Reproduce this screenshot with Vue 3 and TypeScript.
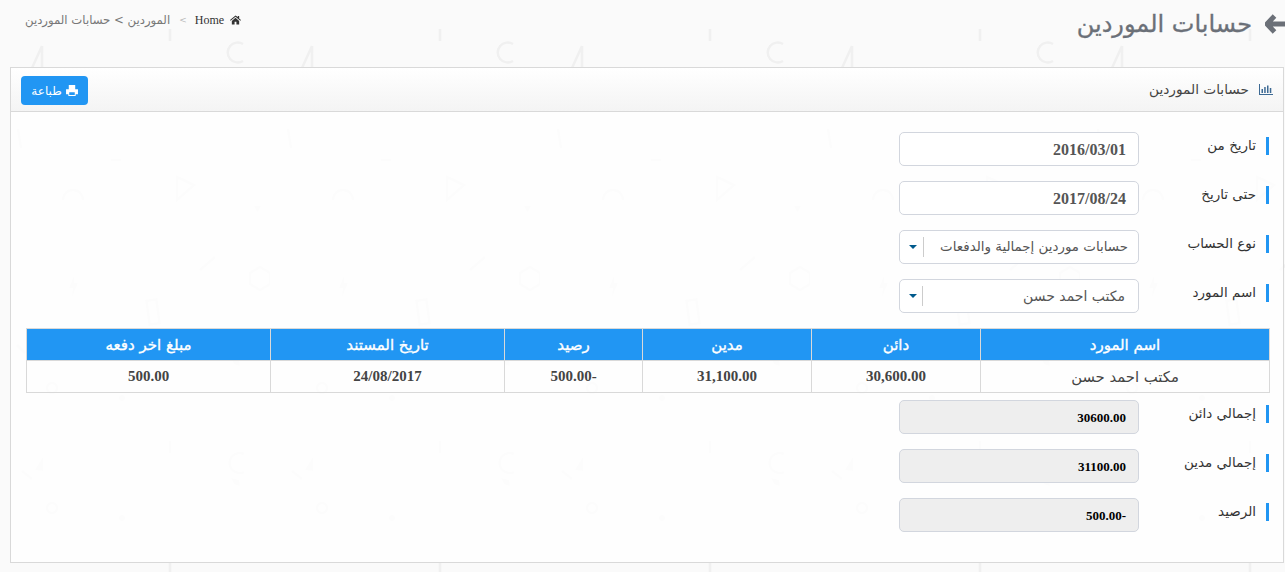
<template>
  <div class="page" dir="rtl">
    <div class="topbar">
      <h1 class="title">
        <svg class="back" viewBox="0 0 20 22" width="20" height="22">
          <path d="M9.500 3 2 11l7.500 8M3.500 11H20" fill="none" stroke="#6b7078" stroke-width="5" stroke-linejoin="round" />
        </svg>
        <span>حسابات الموردين</span>
      </h1>
      <div class="crumbs">
        <svg class="home" viewBox="0 0 12 10" width="11" height="10">
          <path d="M6 0 0 5l.7.8L6 1.400l5.300 4.400.7-.8-2-1.700V.6H8.600v1.200zM2 6v4h3V7h2v3h3V6L6 2.600z" fill="#333" />
        </svg>
        <span class="home-text">Home</span>
        <span class="sep">&gt;</span>
        <span class="current">الموردين &gt; حسابات الموردين</span>
      </div>
    </div>

    <section class="panel">
      <header class="panel-head">
        <div class="head-title">
          <svg viewBox="0 0 14 11" width="14" height="11">
            <path d="M0 0h1v10h13v1H0zM2.500 5h1.500v4H2.500zM5.200 3h1.500v6H5.200zM8 1.500h1.500V9H8zM10.800 4h1.500v5h-1.500z" fill="#3d6a94" />
          </svg>
          <span>حسابات الموردين</span>
        </div>
        <button class="print" type="button">
          <svg viewBox="0 0 13 12" width="12" height="11">
            <path d="M3 0h7v4.500H3zM0 4.500h13V10h-2.500v2h-8v-2H0zM3.500 8v2.800h6V8z" fill="#fff" fill-rule="evenodd" />
          </svg>
          <span>طباعة</span>
        </button>
      </header>

      <div class="panel-body">
        <div v-for="row in filters" :key="row.label" class="row">
          <label class="label">{{ row.label }}</label>
          <div class="control date">{{ row.value }}</div>
        </div>

        <div v-for="(row, i) in selects" :key="row.label" class="row">
          <label class="label">{{ row.label }}</label>
          <div class="control select" :class="{ narrow: i === 1 }">
            <span>{{ row.value }}</span>
            <i class="arrow"></i>
          </div>
        </div>

        <table class="grid">
          <colgroup>
            <col v-for="w in colWidths" :key="w.id" :style="{ width: w.size + 'px' }" />
          </colgroup>
          <thead>
            <tr>
              <th v-for="h in headers" :key="h">{{ h }}</th>
            </tr>
          </thead>
          <tbody>
            <tr>
              <td class="name">مكتب احمد حسن</td>
              <td>30,600.00</td>
              <td>31,100.00</td>
              <td>-500.00</td>
              <td>24/08/2017</td>
              <td>500.00</td>
            </tr>
          </tbody>
        </table>

        <div v-for="row in totals" :key="row.label" class="row">
          <label class="label">{{ row.label }}</label>
          <div class="control total">{{ row.value }}</div>
        </div>
      </div>
    </section>
  </div>
</template>

<script setup lang="ts">
const filters = [
  { label: 'تاريخ من', value: '2016/03/01' },
  { label: 'حتى تاريخ', value: '2017/08/24' },
]

const selects = [
  { label: 'نوع الحساب', value: 'حسابات موردين إجمالية والدفعات' },
  { label: 'اسم المورد', value: 'مكتب احمد حسن' },
]

const headers = ['اسم المورد', 'دائن', 'مدين', 'رصيد', 'تاريخ المستند', 'مبلغ اخر دفعه']

const colWidths = [
  { id: 'name', size: 289 },
  { id: 'credit', size: 169 },
  { id: 'debit', size: 169 },
  { id: 'balance', size: 138 },
  { id: 'date', size: 234 },
  { id: 'last', size: 244 },
]

const totals = [
  { label: 'إجمالي دائن', value: '30600.00' },
  { label: 'إجمالي مدين', value: '31100.00' },
  { label: 'الرصيد', value: '-500.00' },
]
</script>

<style>
html,
body {
  margin: 0;
  height: 572px;
  overflow: hidden;
}

body {
  background-color: #fafafa;
  background-image: url("data:image/svg+xml,%3Csvg xmlns='http://www.w3.org/2000/svg' width='270' height='572'%3E%3Cg fill='none' stroke='%23f0f0f0' stroke-width='2.5'%3E%3Cpath d='M170 29v12M243 44a10 10 0 1 0 0 17M42 46 32 68M42 46v22M18 129l3 19M111 160h10M63 200a10 10 0 0 1 20 0M177 177l17 8-17 15zM200 270l15-13M260 267l10 6v11l-10 6-10-6v-11zM17 345l8 8M170 441v12M244 454a10 10 0 1 0 0 18M22 471l10 8M170 563v9'/%3E%3Crect x='148' y='300' width='10' height='24' transform='rotate(-8 153 312)'/%3E%3Ccircle cx='52' cy='388' r='5'/%3E%3Ccircle cx='52' cy='508' r='5'/%3E%3C/g%3E%3Cg fill='%23f0f0f0'%3E%3Cpath d='M254 206h7l-3.500 6zM74 276l-5 12h4l-1 9 6-14h-4zM231 358l8 2 1 6-6-2zM43 457l-8 13 8 1zM231 478l8 2 1 6-6-2z'/%3E%3Ccircle cx='122' cy='398' r='3'/%3E%3Ccircle cx='122' cy='518' r='3'/%3E%3C/g%3E%3C/svg%3E");
}
</style>

<style scoped>
.page {
  font-family: "DejaVu Sans", sans-serif;
  color: #444;
  height: 572px;
}

.topbar {
  display: flex;
  justify-content: space-between;
  height: 67px;
}

.title {
  display: flex;
  align-items: center;
  gap: 13px;
  height: 48px;
  margin: 0;
  font-size: 24px;
  font-weight: 400;
  color: #6b7078;
  -webkit-text-stroke: 0.3px #6b7078;
}

.back {
  flex: none;
}

.crumbs {
  display: flex;
  align-items: center;
  height: 40px;
  padding-left: 25px;
  font-size: 11.7px;
  color: #777;
}

.home-text {
  margin: 0 6px 0 5px;
  font-family: "Liberation Serif", serif;
  font-size: 12px;
  color: #333;
}

.sep {
  margin: 0 3px 0 9px;
  font-size: 9px;
  color: #bbb;
}

.panel {
  margin: 0 1px 0 10px;
  height: 496px;
  box-sizing: border-box;
  border: 1px solid #d9d9d9;
  background: rgba(255, 255, 255, 0.8);
}

.panel-head {
  display: flex;
  justify-content: space-between;
  align-items: center;
  box-sizing: border-box;
  height: 44px;
  padding: 0 10px;
  border-bottom: 1px solid #d9d9d9;
  background: linear-gradient(#fff, #f4f4f4);
}

.head-title {
  display: flex;
  align-items: center;
  gap: 10px;
  margin-top: -1px;
  font-size: 13.7px;
  color: #444;
}

.print {
  display: flex;
  align-items: center;
  justify-content: center;
  gap: 4px;
  width: 67px;
  height: 29px;
  margin-top: 2px;
  padding: 0;
  border: 0;
  border-radius: 4px;
  background: #2196f3;
  color: #fff;
  font: inherit;
  font-size: 12px;
}

.panel-body {
  padding: 20px 14px 0 15px;
}

.row {
  display: flex;
  align-items: flex-start;
  margin-bottom: 15px;
}

.label {
  box-sizing: border-box;
  width: 130px;
  height: 18px;
  margin-top: 5px;
  padding-right: 10px;
  border-right: 3px solid #2196f3;
  font-size: 13.5px;
  line-height: 16px;
  color: #333;
}

.control {
  box-sizing: border-box;
  width: 240px;
  height: 34px;
  padding: 0 12px;
  border: 1px solid #d2d6de;
  border-radius: 5px;
  background: #fff;
  line-height: 33px;
}

.date {
  font-family: "Liberation Serif", serif;
  font-size: 16px;
  font-weight: 700;
  color: #555;
}

.select {
  display: flex;
  justify-content: space-between;
  align-items: center;
  padding: 0 10px 0 9px;
  font-size: 13.4px;
  color: #555;
}

.select span {
  flex: 1;
  height: 20px;
  line-height: 20px;
  border-left: 1px solid #ccc;
}

.select.narrow {
  font-size: 14px;
}

.select.narrow span {
  padding-right: 3px;
}

.arrow {
  width: 0;
  height: 0;
  margin-right: 6px;
  border: 4px solid transparent;
  border-top-color: #005a8c;
  border-bottom: 0;
}

.narrow .arrow {
  margin-right: 5px;
}

.grid {
  width: 1243px;
  margin: 0 -1px 7px 0;
  border-collapse: collapse;
  table-layout: fixed;
  text-align: center;
}

.grid th,
.grid td {
  height: 31px;
  padding: 0;
  border: 1px solid #d9d9d9;
}

.grid th {
  background: #2196f3;
  color: #fff;
  font-size: 15px;
  font-weight: 400;
  -webkit-text-stroke: 0.35px #fff;
}

.grid td {
  font-family: "Liberation Serif", serif;
  font-size: 15px;
  font-weight: 700;
  color: #444;
}

.grid td.name {
  font-family: "DejaVu Sans", sans-serif;
  font-size: 14.8px;
  font-weight: 400;
}

.total {
  background: #eee;
  font-family: "Liberation Serif", serif;
  font-size: 13px;
  font-weight: 700;
  color: #000;
}
</style>
